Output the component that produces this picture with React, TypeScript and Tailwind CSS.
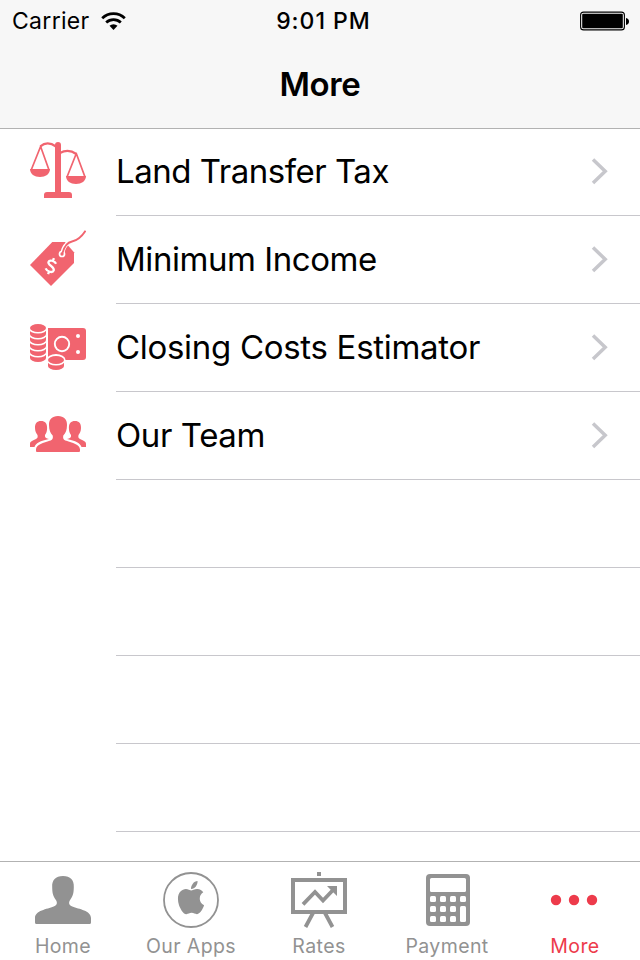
import type { ReactNode } from 'react';
import { FaApple } from 'react-icons/fa';

const Icon = ({ children }: { children: ReactNode }) => (
  <svg width="56" height="56" viewBox="0 0 56 56" fill="currentColor" className="shrink-0">
    {children}
  </svg>
);

const ScalesIcon = () => (
  <Icon>
    <path d="M25 50V3a3 3 0 0 1 6 0v47h8a3 3 0 0 1 3 3v3H14v-3a3 3 0 0 1 3-3z" />
    <path
      d="M26 4.5C20 .2 15 .4 10.3 4.3M30 11c5-2.8 11-2.8 16.3 1"
      fill="none"
      stroke="currentColor"
      strokeWidth="2.2"
    />
    <path
      d="M1.2 28 10.6 4.5 19 28M37 35l9.3-23.5L55 35"
      fill="none"
      stroke="currentColor"
      strokeWidth="1.7"
      strokeLinejoin="round"
    />
    <path d="M0 27h20c0 5-4.5 8-10 8S0 32 0 27zM36 34h20c0 5-4.5 8-10 8s-10-3-10-8z" />
  </Icon>
);

const TagIcon = () => (
  <Icon>
    <path d="M0 35 22.3 12H35l9 10.3V33L21 56z" />
    <circle cx="32" cy="24" r="2.5" fill="none" stroke="white" strokeWidth="1.7" />
    <path d="M32.5 22C33.5 18 35.5 14 40 12" fill="none" stroke="white" strokeWidth="4" />
    <path
      d="M32.3 23.5C34 17 36.5 12.5 42 11.5S51.5 7 55.5.8"
      fill="none"
      stroke="currentColor"
      strokeWidth="1.8"
    />
    <g transform="translate(21 36.2) rotate(20)" fill="none" stroke="white" strokeWidth="2.3">
      <path d="M4-4C1.5-6.3-3.8-6-3.8-3S4-.4 4 3-2 6.3-4.3 3.9M0-8.5v3.5M0 5v3.5" />
    </g>
  </Icon>
);

const coins = [40, 34, 28, 22, 16];

const MoneyIcon = () => (
  <Icon>
    <path d="M18 10h35a3 3 0 0 1 3 3v26a3 3 0 0 1-3 3H18z" />
    <circle cx="32" cy="26" r="7.2" fill="none" stroke="white" strokeWidth="1.9" />
    <circle cx="48" cy="18" r="2" fill="white" />
    <circle cx="48" cy="34" r="2" fill="white" />
    {coins.map((y) => (
      <g key={y}>
        <path d={`M0 ${y - 3}V${y}a8 4 0 0 0 16 0v-3z`} />
        <ellipse cx="8" cy={y - 5.4} rx="9" ry="5" fill="white" />
      </g>
    ))}
    <ellipse cx="8" cy="10" rx="8" ry="4" />
    <ellipse cx="26" cy="41.5" rx="9.4" ry="5.4" fill="white" />
    <path d="M18 45v3a8 4 0 0 0 16 0v-3z" />
    <ellipse cx="26" cy="42.6" rx="9" ry="5" fill="white" />
    <ellipse cx="26" cy="42" rx="8" ry="4" />
  </Icon>
);

const sidePerson =
  'M11 15c-4 0-6.2 2.5-6 7 .1 3.5 1 5 2.500 7 .5 2.5 0 3.3-2 4.3C2.500 34.8 0 35.5 0 38v3h4.500c1-3.800 6-6.200 14.500-8-3-.6-4.500-1.500-4-4 1.500-2 2-3.500 2.100-7 .1-4.500-2-7-6.100-7z';

const TeamIcon = () => (
  <Icon>
    <path d={sidePerson} />
    <path d={sidePerson} transform="matrix(-1 0 0 1 56 0)" />
    <path d="M28 10c-6 0-9.2 3.5-9 9 .1 5 1.2 8 3.7 10.5.5 3 0 4.2-3 5.3C14 36.8 6 38.5 6 43.5V45a1 1 0 0 0 1 1h42a1 1 0 0 0 1-1v-1.5c0-5-8-6.7-13.7-8.7-3-1.1-3.5-2.3-3-5.3C35.800 27 36.900 24 37 19c.2-5.500-3-9-9-9z" />
  </Icon>
);

const HomeIcon = () => (
  <Icon>
    <path d="M28 4c-7.5 0-11.2 4.2-10.8 11 .1 6 .6 9 4 13.5 1.5 3 .5 4.7-2.5 6C12 37.2 0 38.5 0 46v4.5A1.5 1.5 0 0 0 1.5 52h53a1.5 1.5 0 0 0 1.5-1.5V46c0-7.5-12-8.8-18.7-11.5-3-1.3-4-3-2.5-6 3.4-4.5 3.9-7.5 4-13.5C39.2 8.2 35.5 4 28 4z" />
  </Icon>
);

const AppsIcon = () => (
  <Icon>
    <circle cx="28" cy="28" r="27" fill="none" stroke="currentColor" strokeWidth="1.8" />
    <g transform="translate(28 25.6) scale(0.94 1) translate(-18.9 -18.9)">
      <FaApple size={37.8} />
    </g>
  </Icon>
);

const RatesIcon = () => (
  <Icon>
    <path d="M26 0h4v4h-4zM36 14h10v10z" />
    <path d="M2 8h52v32H2z" fill="none" stroke="currentColor" strokeWidth="4" />
    <path
      d="M12 32.3 24 20l8 8.5 10.5-11M22 41l-7.5 14M34 41l7.5 14"
      fill="none"
      stroke="currentColor"
      strokeWidth="3.8"
    />
  </Icon>
);

const PaymentIcon = () => (
  <Icon>
    <rect x="7" y="2" width="44" height="52" rx="4" />
    <g fill="white">
      <rect x="11" y="6" width="36" height="14" rx="1.5" />
      {[11, 21, 31].map((x) =>
        [24, 34, 44].map((y) => <rect key={`${x}-${y}`} x={x} y={y} width="6" height="6" rx="1.5" />),
      )}
      <rect x="41" y="24" width="6" height="6" rx="1.5" />
      <rect x="41" y="34" width="6" height="16" rx="1.5" />
    </g>
  </Icon>
);

const MoreIcon = () => (
  <Icon>
    <circle cx="9" cy="28" r="5.2" />
    <circle cx="27" cy="28" r="5.2" />
    <circle cx="45" cy="28" r="5.2" />
  </Icon>
);

const rows = [
  { label: 'Land Transfer Tax', icon: <ScalesIcon />, spacing: 'tracking-[-0.48px]' },
  { label: 'Minimum Income', icon: <TagIcon />, spacing: 'tracking-[-0.45px]' },
  { label: 'Closing Costs Estimator', icon: <MoneyIcon />, spacing: 'tracking-[-0.3px]' },
  { label: 'Our Team', icon: <TeamIcon />, spacing: 'tracking-[-0.4px]' },
];

const tabs = [
  { label: 'Home', icon: <HomeIcon /> },
  { label: 'Our Apps', icon: <AppsIcon /> },
  { label: 'Rates', icon: <RatesIcon /> },
  { label: 'Payment', icon: <PaymentIcon /> },
  { label: 'More', icon: <MoreIcon />, active: true },
];

const StatusBar = () => (
  <div className="grid h-10 grid-cols-3 items-center pl-3 pr-[11px] text-[23px] leading-10">
    <div className="flex items-center gap-[11px]">
      <span className="tracking-[0.3px]">Carrier</span>
      <svg width="25" height="18" viewBox="0 0 25 18" fill="none" stroke="black" strokeWidth="2.7">
        <path d="M1.2 6.2a16 16 0 0 1 22.6 0M5.2 10.5a10.5 10.5 0 0 1 14.6 0" />
        <path d="M8.5 13.8a6 6 0 0 1 8 0l-4 4.2z" fill="black" stroke="none" />
      </svg>
    </div>
    <span className="pl-1.5 text-center font-medium tracking-[1px]">9:01 PM</span>
    <svg width="49" height="20" viewBox="0 0 49 20" className="justify-self-end">
      <rect x=".6" y="1.1" width="43.8" height="17.8" rx="3" fill="none" stroke="black" strokeWidth="1.1" />
      <rect x="2.2" y="2.7" width="40.6" height="14.6" rx="1" />
      <path d="M46 7c4 .5 4 6.5 0 7z" />
    </svg>
  </div>
);

const App = () => {
  return (
    <div className="flex h-[960px] w-[640px] flex-col overflow-hidden bg-white font-['Inter','Liberation_Sans',sans-serif] text-black">
      <header className="h-32 shrink-0 bg-[#f7f7f7] pt-px shadow-[0_1px_0_#b2b2b2]">
        <StatusBar />
        <h1 className="text-center text-[33px] leading-[86px] font-semibold tracking-[-0.4px]">More</h1>
      </header>
      <main className="min-h-0 flex-1 overflow-hidden">
        {rows.map((row) => (
          <div key={row.label} className="flex h-[88px] pl-[30px] text-[#f1646f]">
            <div className="w-[86px] pt-[14px]">{row.icon}</div>
            <div className="flex flex-1 items-center justify-between border-b border-[#c8c7cc] pr-8">
              <span className={`text-[33px] leading-[87px] text-black ${row.spacing}`}>{row.label}</span>
              <svg width="17" height="28" viewBox="0 0 17 28" fill="none" stroke="#c7c7cc" strokeWidth="3.5">
                <path d="M2 1.500 14.200 13.300 2 25.100" />
              </svg>
            </div>
          </div>
        ))}
        {[0, 1, 2, 3].map((i) => (
          <div key={i} className="ml-[116px] h-[88px] border-b border-[#c8c7cc]" />
        ))}
      </main>
      <nav className="h-[99px] shrink-0 border-t border-[#b2b2b2] bg-white">
        <div className="-ml-px flex">
          {tabs.map((tab) => (
            <div
              key={tab.label}
              className={`flex w-32 shrink-0 flex-col items-center pt-[10px] ${tab.active ? 'text-[#ed3b4b]' : 'text-[#929292]'}`}
            >
              {tab.icon}
              <span className="mt-1 text-[19.5px] leading-7 tracking-[0.4px]">{tab.label}</span>
            </div>
          ))}
        </div>
      </nav>
    </div>
  );
};

export default App;
